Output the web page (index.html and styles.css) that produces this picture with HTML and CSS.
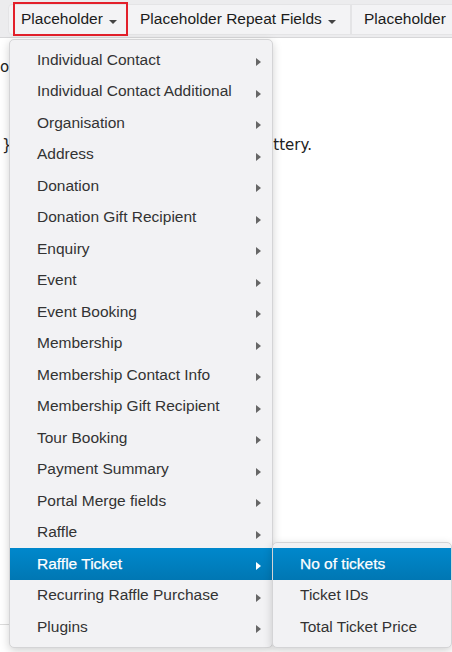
FILE: index.html
```html
<!DOCTYPE html>
<html>
<head>
<meta charset="utf-8">
<link rel="stylesheet" href="styles.css">
</head>
<body>
<div class="page">
  <div class="toolbar">
    <div class="btn btn-first">Placeholder<span class="caret"></span></div>
    <div class="btn btn-second">Placeholder Repeat Fields<span class="caret"></span></div>
    <div class="btn btn-third">Placeholder</div>
  </div>
  <div class="editor">
    <p class="l1">ou</p>
    <p class="l3"><span>}</span><span>the lottery.</span></p>
  </div>
  <ul class="menu">
    <li class="item"><span class="label">Individual Contact</span><span class="arrow"></span></li>
    <li class="item"><span class="label">Individual Contact Additional</span><span class="arrow"></span></li>
    <li class="item"><span class="label">Organisation</span><span class="arrow"></span></li>
    <li class="item"><span class="label">Address</span><span class="arrow"></span></li>
    <li class="item"><span class="label">Donation</span><span class="arrow"></span></li>
    <li class="item"><span class="label">Donation Gift Recipient</span><span class="arrow"></span></li>
    <li class="item"><span class="label">Enquiry</span><span class="arrow"></span></li>
    <li class="item"><span class="label">Event</span><span class="arrow"></span></li>
    <li class="item"><span class="label">Event Booking</span><span class="arrow"></span></li>
    <li class="item"><span class="label">Membership</span><span class="arrow"></span></li>
    <li class="item"><span class="label">Membership Contact Info</span><span class="arrow"></span></li>
    <li class="item"><span class="label">Membership Gift Recipient</span><span class="arrow"></span></li>
    <li class="item"><span class="label">Tour Booking</span><span class="arrow"></span></li>
    <li class="item"><span class="label">Payment Summary</span><span class="arrow"></span></li>
    <li class="item"><span class="label">Portal Merge fields</span><span class="arrow"></span></li>
    <li class="item"><span class="label">Raffle</span><span class="arrow"></span></li>
    <li class="item active has-sub"><span class="label">Raffle Ticket</span><span class="arrow"></span>
      <ul class="submenu">
        <li class="item active"><span class="label">No of tickets</span></li>
        <li class="item"><span class="label">Ticket IDs</span></li>
        <li class="item"><span class="label">Total Ticket Price</span></li>
      </ul>
    </li>
    <li class="item"><span class="label">Recurring Raffle Purchase</span><span class="arrow"></span></li>
    <li class="item"><span class="label">Plugins</span><span class="arrow"></span></li>
  </ul>
</div>
</body>
</html>
```

FILE: styles.css
```css
* { box-sizing: border-box; }

html, body {
  margin: 0;
  padding: 0;
  background: #ffffff;
  overflow: hidden;
}

.page {
  position: relative;
  width: 452px;
  height: 652px;
  overflow: hidden;
  font-family: "Liberation Sans", Arial, sans-serif;
}

.toolbar {
  display: flex;
  height: 38px;
  padding: 4px 0 2px 8px;
  background: #ececee;
  border-bottom: 1px solid #d6d6d8;
}

.btn {
  position: relative;
  flex: none;
  height: 31px;
  padding: 3px 12px 0 12px;
  font-size: 15.5px;
  line-height: 21px;
  color: #1b1b1b;
  background: #f3f3f5;
  border: 1px solid #e4e4e6;
  border-radius: 4px;
  white-space: nowrap;
}

.btn-first { width: 120px; border-radius: 4px 0 0 4px; }
.btn-second { width: 223px; padding-left: 12px; border-left: none; border-radius: 0; }
.btn-third { width: 110px; padding-left: 12px; border-left: 1px solid #e4e4e6; border-radius: 0; }

.btn-first::after {
  content: "";
  position: absolute;
  left: 4px;
  right: -1px;
  top: -3px;
  bottom: -2px;
  border: 2px solid #e3202b;
}

.caret {
  display: inline-block;
  width: 0;
  height: 0;
  margin-left: 6px;
  border-top: 4px solid #444;
  border-left: 4px solid transparent;
  border-right: 4px solid transparent;
}

.editor {
  height: 587px;
  border-bottom: 1px solid #dcdcdc;
  font-family: "DejaVu Sans", Verdana, sans-serif;
  font-size: 15px;
  line-height: 20px;
  color: #222;
}

.editor p { margin: 0; white-space: nowrap; }

.l1 { padding-top: 19px; }

.l3 {
  display: flex;
  justify-content: space-between;
  width: 312px;
  margin-top: 58px !important;
  padding-left: 2px;
}

.menu {
  position: absolute;
  left: 9px;
  top: 39px;
  width: 264px;
  margin: 0;
  padding: 4px 0;
  list-style: none;
  background: #f2f2f4;
  border: 1px solid #d4d4d6;
  border-radius: 5px;
  box-shadow: 0 3px 10px rgba(0, 0, 0, 0.18);
}

.item {
  position: relative;
  display: flex;
  align-items: center;
  height: 31.5px;
  padding: 0 11px 0 27px;
  font-size: 15.5px;
  color: #333;
  white-space: nowrap;
}

.arrow {
  width: 0;
  height: 0;
  margin-left: auto;
  margin-top: 5px;
  border-left: 5px solid #666;
  border-top: 4px solid transparent;
  border-bottom: 4px solid transparent;
}

.item.active {
  color: #fff;
  background: linear-gradient(to bottom, #0088cc, #0077b3);
  -webkit-text-stroke: 0.25px #fff;
}

.item.active > .arrow { border-left-color: #fff; }

.submenu {
  position: absolute;
  left: 100%;
  top: -6px;
  width: 180px;
  margin: 0;
  padding: 5px 0 4px;
  list-style: none;
  background: #f2f2f4;
  border: 1px solid #d4d4d6;
  border-radius: 5px;
  box-shadow: 0 3px 10px rgba(0, 0, 0, 0.18);
  -webkit-text-stroke: 0;
}

.submenu .item { -webkit-text-stroke: 0; color: #333; }
.submenu .item.active { color: #fff; -webkit-text-stroke: 0.25px #fff; }
```
